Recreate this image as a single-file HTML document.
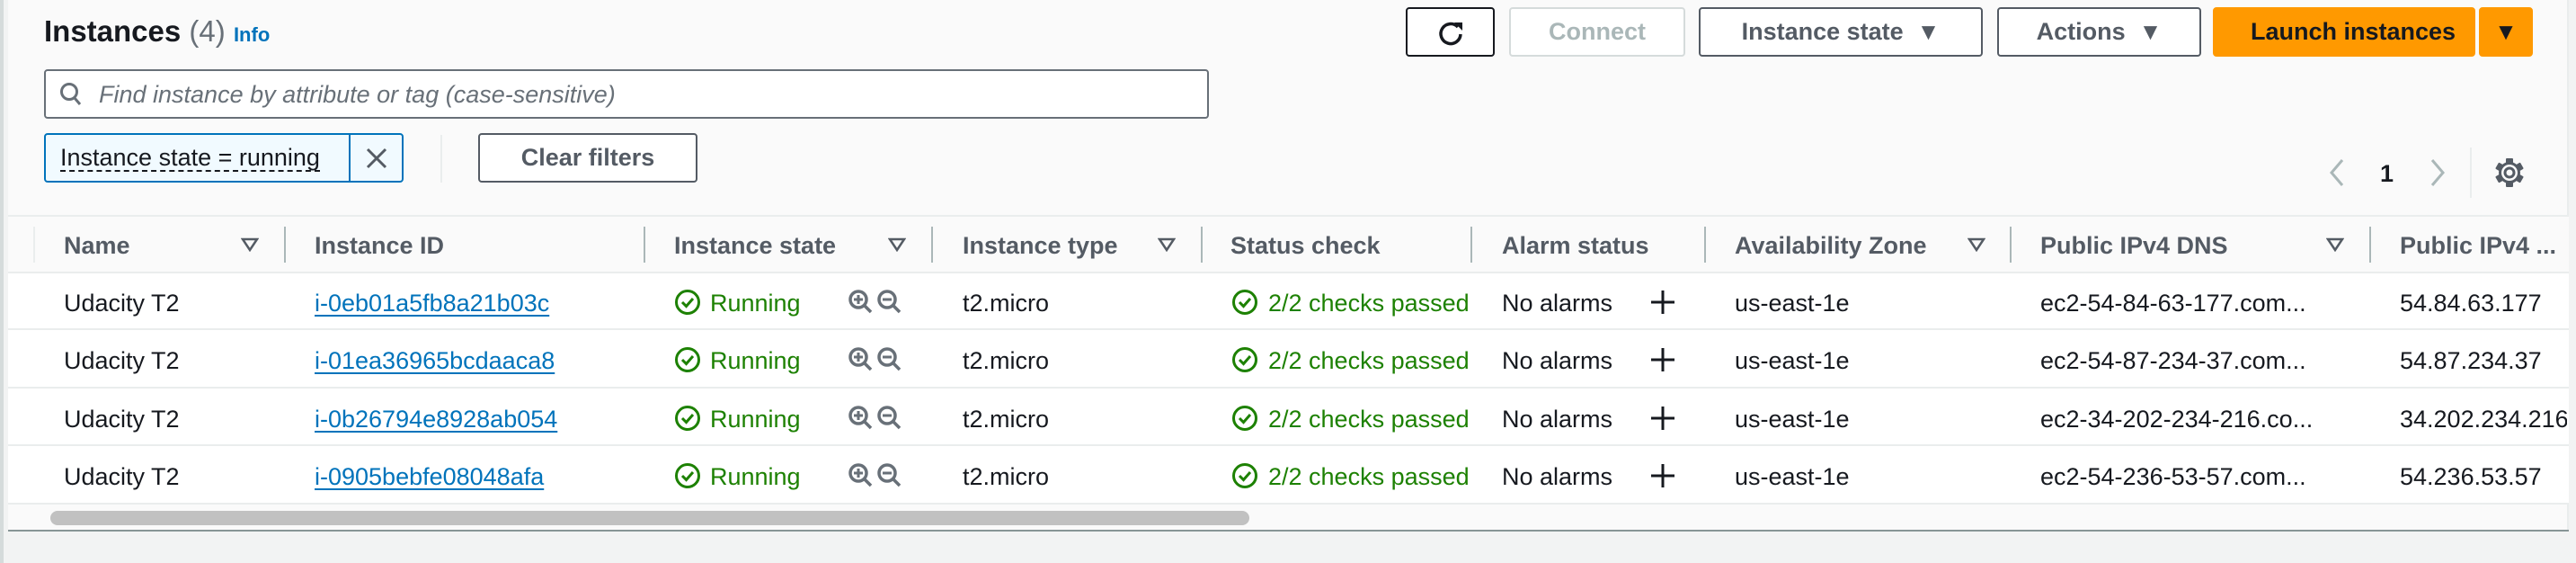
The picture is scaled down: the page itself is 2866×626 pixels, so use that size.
<!DOCTYPE html>
<html><head><meta charset="utf-8"><style>
*{margin:0;padding:0;box-sizing:border-box}
body{width:2866px;height:626px;background:#f2f3f3;font-family:"Liberation Sans",sans-serif;position:relative;overflow:hidden;color:#16191f}
.a{position:absolute}
.panel{left:9px;top:0;width:2849px;height:590px;background:#fafafa;border-right:2px solid #eaeded}
.btn{position:absolute;border:2px solid #545b64;border-radius:4px;background:#fff;font-weight:bold;font-size:27px;color:#545b64;display:flex;align-items:center;justify-content:center}
.t{position:absolute;font-size:27px;line-height:30px;white-space:nowrap}
.h{font-weight:bold;color:#545b64}
.div{position:absolute;width:2px;background:#aab7b8;top:252px;height:40px}
.link{color:#0073bb;text-decoration:underline;text-underline-offset:4px}
.g{color:#1d8102}
</style></head><body>
<div class="a" style="left:0;top:0;width:4px;height:626px;background:#d5dbdb"></div>
<div class="a panel"></div>
<div class="t" style="left:49px;top:16px;font-size:33px;line-height:38px;font-weight:bold">Instances <span style="font-weight:normal;color:#687078">(4)</span> <span style="font-size:22px;color:#0073bb">Info</span></div>
<div class="a" style="left:49px;top:77px;width:1296px;height:55px;background:#fff;border:2px solid #687078;border-radius:4px"></div>
<svg class="a" style="left:66px;top:91px" width="26" height="28" viewBox="0 0 26 28"><circle cx="11" cy="11" r="8.5" fill="none" stroke="#687078" stroke-width="3"/><line x1="17" y1="18" x2="23" y2="25" stroke="#687078" stroke-width="3"/></svg>
<div class="t" style="left:110px;top:90px;font-style:italic;color:#687078">Find instance by attribute or tag (case-sensitive)</div>
<div class="a" style="left:49px;top:148px;width:400px;height:55px;background:#f1faff;border:2px solid #0073bb;border-radius:4px"></div>
<div class="a" style="left:388px;top:149px;width:2px;height:53px;background:#0073bb"></div>
<div class="t" style="left:67px;top:161px;border-bottom:2px dashed #16191f;line-height:28px">Instance state = running</div>
<svg class="a" style="left:405px;top:162px" width="28" height="28"><path d="M4 4L24 24M24 4L4 24" stroke="#545b64" stroke-width="3"/></svg>
<div class="a" style="left:490px;top:150px;width:2px;height:53px;background:#eaeded"></div>
<div class="btn" style="left:532px;top:148px;width:244px;height:55px">Clear filters</div>
<div class="btn" style="left:1564px;top:8px;width:99px;height:55px;border-color:#16191f">
<svg width="32" height="32" viewBox="0 0 32 32"><path d="M24 10A11 11 0 1 0 27 18" fill="none" stroke="#16191f" stroke-width="3.5"/><path d="M20 5L29 5L29 14Z" fill="#16191f"/></svg></div>
<div class="btn" style="left:1679px;top:8px;width:196px;height:55px;border-color:#d5dbdb;color:#aab7b8">Connect</div>
<div class="btn" style="left:1890px;top:8px;width:316px;height:55px">Instance state&nbsp;&nbsp;<span style="font-size:26px">▼</span></div>
<div class="btn" style="left:2222px;top:8px;width:227px;height:55px">Actions&nbsp;&nbsp;<span style="font-size:26px">▼</span></div>
<div class="btn" style="left:2462px;top:8px;width:292px;height:55px;background:#ff9900;border-color:#ff9900;color:#16191f;padding-left:20px">Launch instances</div>
<div class="btn" style="left:2758px;top:8px;width:60px;height:55px;background:#ff9900;border-color:#ff9900;color:#16191f;font-size:26px">▼</div>
<svg class="a" style="left:2590px;top:176px" width="20" height="32"><path d="M16 2L4 16L16 30" fill="none" stroke="#aab7b8" stroke-width="3"/></svg>
<div class="t" style="left:2648px;top:178px;font-weight:bold">1</div>
<svg class="a" style="left:2702px;top:176px" width="20" height="32"><path d="M4 2L16 16L4 30" fill="none" stroke="#aab7b8" stroke-width="3"/></svg>
<div class="a" style="left:2748px;top:164px;width:2px;height:56px;background:#eaeded"></div>
<svg class="a" style="left:2774px;top:174px" width="36" height="36" viewBox="0 0 36 36"><g fill="#545b64"><circle cx="18" cy="18" r="12"/><rect x="14" y="2" width="8" height="32" rx="1"/><rect x="14" y="2" width="8" height="32" rx="1" transform="rotate(60 18 18)"/><rect x="14" y="2" width="8" height="32" rx="1" transform="rotate(120 18 18)"/></g><circle cx="18" cy="18" r="9" fill="#fafafa"/><circle cx="18" cy="18" r="5" fill="none" stroke="#545b64" stroke-width="3"/></svg>
<div class="a" style="left:9px;top:239px;width:2849px;height:2px;background:#eaeded"></div>
<div class="a" style="left:9px;top:241px;width:2849px;height:62px;background:#fafafa"></div>
<div class="a" style="left:9px;top:303px;width:2849px;height:257px;background:#fff"></div>
<div class="a" style="left:9px;top:302px;width:2849px;height:2px;background:#eaeded"></div>
<div class="a" style="left:9px;top:365px;width:2849px;height:2px;background:#eaeded"></div>
<div class="a" style="left:9px;top:430px;width:2849px;height:2px;background:#eaeded"></div>
<div class="a" style="left:9px;top:494px;width:2849px;height:2px;background:#eaeded"></div>
<div class="a" style="left:9px;top:559px;width:2849px;height:2px;background:#eaeded"></div>
<div class="a" style="left:56px;top:568px;width:1334px;height:16px;background:#c1c1c1;border-radius:8px"></div>
<div class="a" style="left:9px;top:589px;width:2849px;height:2px;background:#879596"></div>
<div class="a" style="left:37px;top:252px;width:2px;height:40px;background:#eaeded"></div>
<div class="div" style="left:316px"></div><div class="div" style="left:716px"></div><div class="div" style="left:1036px"></div><div class="div" style="left:1336px"></div><div class="div" style="left:1636px"></div><div class="div" style="left:1896px"></div><div class="div" style="left:2236px"></div><div class="div" style="left:2636px"></div>
<div class="t h" style="left:71px;top:258px">Name</div>
<div class="t h" style="left:350px;top:258px">Instance ID</div>
<div class="t h" style="left:750px;top:258px">Instance state</div>
<div class="t h" style="left:1071px;top:258px">Instance type</div>
<div class="t h" style="left:1369px;top:258px">Status check</div>
<div class="t h" style="left:1671px;top:258px">Alarm status</div>
<div class="t h" style="left:1930px;top:258px">Availability Zone</div>
<div class="t h" style="left:2270px;top:258px">Public IPv4 DNS</div>
<div class="t h" style="left:2670px;top:258px;width:186px;overflow:hidden">Public IPv4 ...</div>
<svg class="a" style="left:268px;top:264px" width="20" height="16"><path d="M2 2H18L10 14Z" fill="none" stroke="#545b64" stroke-width="2.5"/></svg>
<svg class="a" style="left:988px;top:264px" width="20" height="16"><path d="M2 2H18L10 14Z" fill="none" stroke="#545b64" stroke-width="2.5"/></svg>
<svg class="a" style="left:1288px;top:264px" width="20" height="16"><path d="M2 2H18L10 14Z" fill="none" stroke="#545b64" stroke-width="2.5"/></svg>
<svg class="a" style="left:2189px;top:264px" width="20" height="16"><path d="M2 2H18L10 14Z" fill="none" stroke="#545b64" stroke-width="2.5"/></svg>
<svg class="a" style="left:2588px;top:264px" width="20" height="16"><path d="M2 2H18L10 14Z" fill="none" stroke="#545b64" stroke-width="2.5"/></svg>
<div id="rows"></div>
<script>
var ids=["i-0eb01a5fb8a21b03c","i-01ea36965bcdaaca8","i-0b26794e8928ab054","i-0905bebfe08048afa"];
var dns=["ec2-54-84-63-177.com...","ec2-54-87-234-37.com...","ec2-34-202-234-216.co...","ec2-54-236-53-57.com..."];
var ip=["54.84.63.177","54.87.234.37","34.202.234.216","54.236.53.57"];
var ys=[322,386,451,515];
var chk='<svg width="30" height="30" viewBox="0 0 30 30"><circle cx="15" cy="15" r="12.5" fill="none" stroke="#1d8102" stroke-width="3"/><path d="M9 15L13.5 19.5L21 11" fill="none" stroke="#1d8102" stroke-width="3"/></svg>';
var zp='<svg width="30" height="30" viewBox="0 0 30 30"><circle cx="12" cy="12" r="9" fill="none" stroke="#687078" stroke-width="3.5"/><path d="M18.5 18.5L26 26" stroke="#687078" stroke-width="3.5"/><path d="M12 7V17M7 12H17" stroke="#687078" stroke-width="3"/></svg>';
var zm='<svg width="30" height="30" viewBox="0 0 30 30"><circle cx="12" cy="12" r="9" fill="none" stroke="#687078" stroke-width="3.5"/><path d="M18.5 18.5L26 26" stroke="#687078" stroke-width="3.5"/><path d="M7 12H17" stroke="#687078" stroke-width="3"/></svg>';
var h='';
for(var i=0;i<4;i++){var y=ys[i];
h+='<div class="t" style="left:71px;top:'+y+'px">Udacity T2</div>';
h+='<div class="t link" style="left:350px;top:'+y+'px">'+ids[i]+'</div>';
h+='<div class="a" style="left:750px;top:'+(y-1)+'px">'+chk+'</div><div class="t g" style="left:790px;top:'+y+'px">Running</div>';
h+='<div class="a" style="left:943px;top:'+(y-1)+'px">'+zp+'</div><div class="a" style="left:975px;top:'+(y-1)+'px">'+zm+'</div>';
h+='<div class="t" style="left:1071px;top:'+y+'px">t2.micro</div>';
h+='<div class="a" style="left:1370px;top:'+(y-1)+'px">'+chk+'</div><div class="t g" style="left:1411px;top:'+y+'px">2/2 checks passed</div>';
h+='<div class="t" style="left:1671px;top:'+y+'px">No alarms</div>';
h+='<svg class="a" style="left:1836px;top:'+(y)+'px" width="28" height="28"><path d="M14 1V27M1 14H27" stroke="#16191f" stroke-width="3"/></svg>';
h+='<div class="t" style="left:1930px;top:'+y+'px">us-east-1e</div>';
h+='<div class="t" style="left:2270px;top:'+y+'px">'+dns[i]+'</div>';
h+='<div class="t" style="left:2670px;top:'+y+'px;width:186px;overflow:hidden">'+ip[i]+'</div>';}
document.getElementById('rows').innerHTML=h;
</script>
</body></html>
